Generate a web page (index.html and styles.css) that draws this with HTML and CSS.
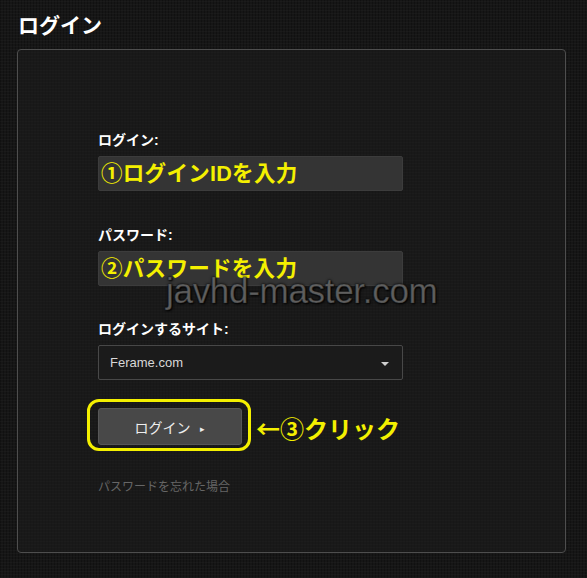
FILE: index.html
```html
<!DOCTYPE html>
<html lang="ja">
<head>
    <meta charset="UTF-8">
    <title>ログイン</title>
    <link rel="stylesheet" href="styles.css">
</head>
<body>
    <h1 class="heading">ログイン</h1>

    <div class="panel">
        <div class="form">
            <label class="label">ログイン:</label>
            <div class="field"><span class="hint">①ログインIDを入力</span></div>

            <label class="label">パスワード:</label>
            <div class="field"><span class="hint">②パスワードを入力</span></div>

            <label class="label">ログインするサイト:</label>
            <div class="select">
                <span>Ferame.com</span>
                <span class="caret"></span>
            </div>

            <div class="btn-row">
                <div class="btn-wrap">
                    <button class="btn">ログイン <span class="arrow">&#9656;</span></button>
                    <div class="ring"></div>
                </div>
                <span class="click-note">←③クリック</span>
            </div>

            <a class="forgot">パスワードを忘れた場合</a>
        </div>

        <div class="watermark">javhd-master.com</div>
    </div>
</body>
</html>
```

FILE: styles.css
```css
body {
    margin: 0;
    font-family: "Liberation Sans", "Noto Sans CJK JP", sans-serif;
    background-color: #161616;
    background-image:
        repeating-linear-gradient(0deg, rgba(255,255,255,0.025) 0 1px, transparent 1px 3px),
        repeating-linear-gradient(90deg, rgba(0,0,0,0.25) 0 1px, transparent 1px 3px);
    height: 578px;
    overflow: hidden;
}
.heading {
    margin: 0;
    padding: 13px 0 0 18px;
    height: 36px;
    box-sizing: border-box;
    font-size: 21px;
    font-weight: bold;
    color: #fff;
    line-height: 26px;
}
.panel {
    position: relative;
    margin: 13px 0 0 17px;
    width: 549px;
    height: 504px;
    box-sizing: border-box;
    border: 1px solid #4e4e4e;
    border-radius: 4px;
    background-color: rgba(30,30,30,0.55);
}
.form {
    display: flex;
    flex-direction: column;
    align-items: flex-start;
    padding: 81px 0 0 80px;
}
.label {
    font-size: 14px;
    font-weight: bold;
    color: #fff;
    line-height: 18px;
    margin-bottom: 7px;
}
.field {
    width: 305px;
    height: 35px;
    box-sizing: border-box;
    background: #343434;
    border: 1px solid #3c3c3c;
    border-radius: 2px;
    display: flex;
    align-items: center;
    padding-left: 2px;
    margin-bottom: 35px;
}
.field + .label + .field {
    margin-bottom: 34px;
}
.hint {
    font-size: 21.5px;
    font-weight: bold;
    color: #f4f000;
    line-height: 24px;
    letter-spacing: 0.3px;
}
.select {
    width: 305px;
    height: 35px;
    box-sizing: border-box;
    border: 1px solid #484848;
    border-radius: 2px;
    background: #1b1b1b;
    display: flex;
    align-items: center;
    justify-content: space-between;
    padding: 0 13px 0 11px;
    font-size: 13px;
    color: #d8d8d8;
    margin-bottom: 28px;
}
.caret {
    width: 0;
    height: 0;
    border-left: 4px solid transparent;
    border-right: 4px solid transparent;
    border-top: 4px solid #cfcfcf;
    margin-top: 3px;
}
.btn-row {
    display: flex;
    align-items: center;
    gap: 14px;
    margin-bottom: 33px;
}
.btn-wrap {
    position: relative;
}
.btn {
    width: 144px;
    height: 37px;
    background: #484848;
    border: 1px solid #575757;
    border-radius: 3px;
    color: #eee;
    font-family: "Liberation Sans", "Noto Sans CJK JP", sans-serif;
    font-size: 14px;
    padding: 0;
    cursor: pointer;
}
.arrow {
    font-size: 9px;
    margin-left: 6px;
    position: relative;
    top: -1px;
}
.ring {
    position: absolute;
    left: -11px;
    top: -9px;
    width: 164px;
    height: 52px;
    box-sizing: border-box;
    border: 3px solid #f4f000;
    border-radius: 12px;
}
.click-note {
    font-family: "Noto Sans CJK JP", sans-serif;
    font-size: 24px;
    font-weight: bold;
    color: #f4f000;
    line-height: 28px;
    position: relative;
    top: 1px;
}
.forgot {
    font-size: 12px;
    color: #666;
    line-height: 18px;
}
.watermark {
    position: absolute;
    left: 148px;
    top: 221px;
    font-size: 35px;
    color: rgba(125,125,125,0.75);
    text-shadow: 0 0 3px #000, 1px 1px 2px #000;
    -webkit-text-stroke: 0.6px rgba(40,40,40,0.8);
    letter-spacing: -0.3px;
}
```
